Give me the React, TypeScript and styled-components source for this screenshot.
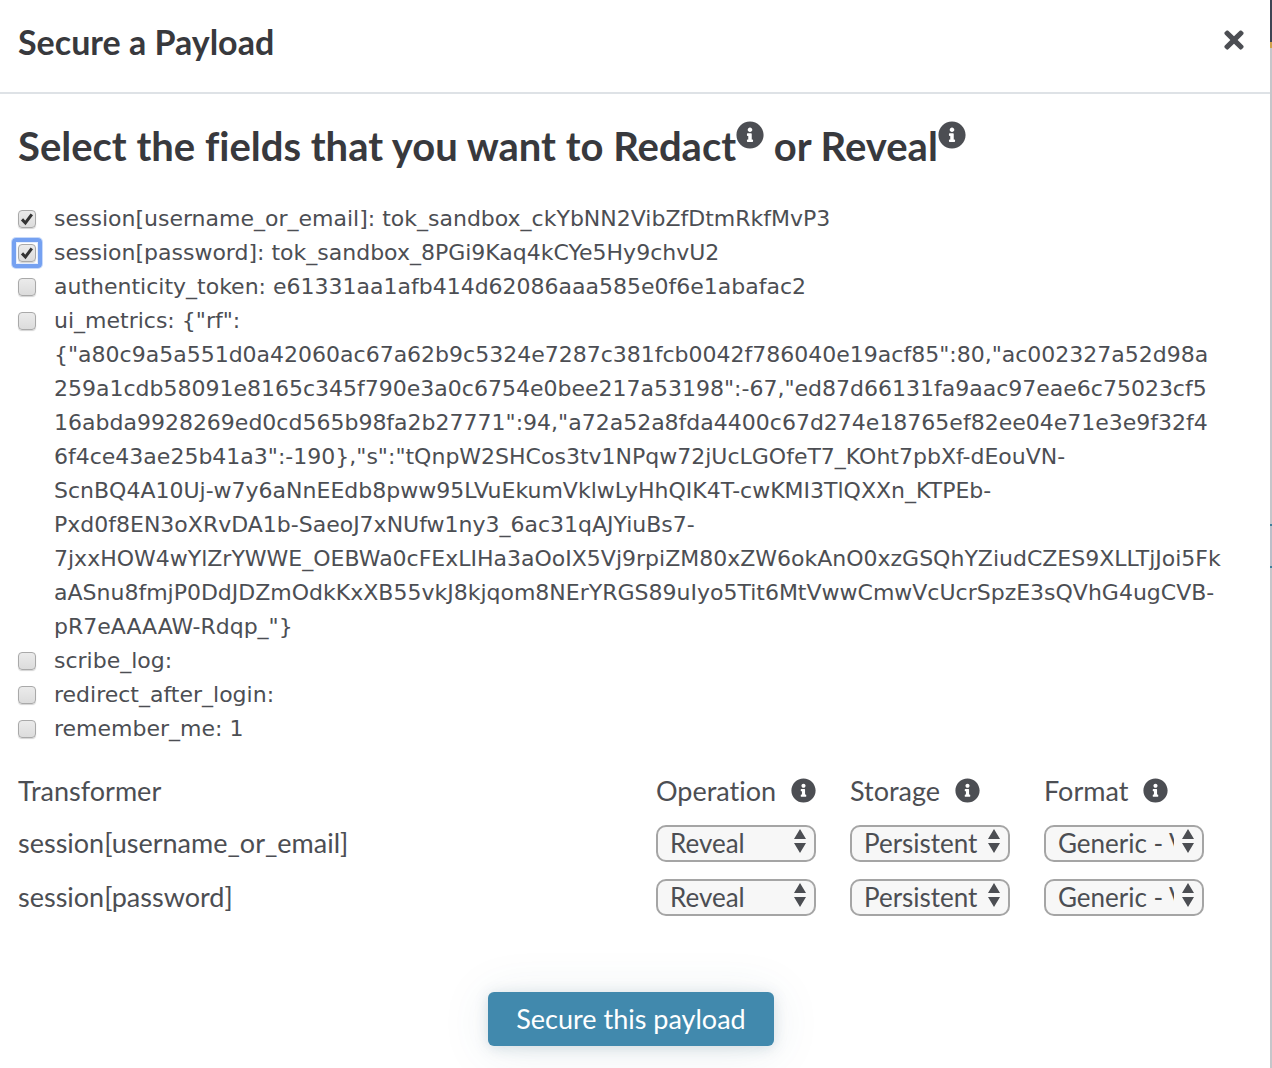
import React, { useState } from "react";
import styled, { createGlobalStyle } from "styled-components";
import { FaInfoCircle, FaTimes } from "react-icons/fa";

const ink = "#4c4e53";
const heading = "#38393d";

const GlobalStyle = createGlobalStyle`
  *, *::before, *::after { box-sizing: border-box; }
  body {
    margin: 0;
    color: ${ink};
    font-family: Lato, "Open Sans", sans-serif;
    font-variant-ligatures: none;
    background: #c5c6ca;
  }
`;

const Page = styled.div`
  min-height: 100vh;
  display: flex;
  padding-right: 2px;
  background: linear-gradient(
    #3d4554 0 42px,
    #cfa24c 42px 48px,
    #c5c6ca 48px 524px,
    #3f7f9b 524px 526px,
    #bcbfc9 526px 566px,
    #3f7f9b 566px 568px,
    #c5c6ca 568px
  );
`;

const Modal = styled.section`
  flex: 1;
  min-width: 0;
  background: #fff;
`;

const Header = styled.header`
  display: flex;
  align-items: center;
  justify-content: space-between;
  height: 94px;
  padding: 0 22px 8px 18px;
  border-bottom: 2px solid #dee2e6;
`;

const Title = styled.h1`
  margin: 0;
  color: ${heading};
  font-size: 34px;
  line-height: 40px;
`;

const CloseButton = styled.button`
  display: flex;
  padding: 0 0 4px;
  border: 0;
  background: none;
  color: ${ink};
  font-size: 28px;
  cursor: pointer;
`;

const Body = styled.div`
  padding: 27px 26px 22px 18px;
`;

const Question = styled.h2`
  margin: 0 0 31px;
  color: ${heading};
  font-size: 40px;
  line-height: 50px;
`;

const HeadingIcon = styled(FaInfoCircle)`
  width: 28px;
  height: 28px;
  color: ${ink};
  vertical-align: 12px;
`;

const FieldList = styled.ul`
  margin: 0 0 27px;
  padding: 0;
  list-style: none;
  font-family: "DejaVu Sans", "Open Sans", sans-serif;
  font-size: 22px;
  line-height: 34px;
`;

const FieldLabel = styled.label`
  display: flex;
  align-items: flex-start;
  gap: 18px;
`;

const FieldText = styled.span`
  min-width: 0;
  white-space: pre-line;
  overflow-wrap: anywhere;
`;

const CheckFrame = styled.span`
  position: relative;
  display: flex;
  flex: none;
  margin-top: 8px;

  &:focus-within::before {
    content: "";
    position: absolute;
    inset: -6px;
    border: 4px solid #75a1f1;
    border-radius: 4px;
    box-shadow: 0 0 0 1px #c8dafa, inset 0 0 0 1px #e4edfd;
    pointer-events: none;
  }
`;

const CheckMark = styled.svg`
  position: absolute;
  inset: 0;
  display: none;
  pointer-events: none;
`;

const CheckBox = styled.input`
  appearance: none;
  width: 18px;
  height: 18px;
  margin: 0;
  border: 1px solid #a9a9a9;
  border-radius: 4px;
  outline: none;
  background: linear-gradient(#ebebeb, #dcdcdc);
  box-shadow: 0 1px 1px #d4d4d4;

  &:checked + ${CheckMark} { display: block; }
`;

const TransformTable = styled.table`
  width: 100%;
  table-layout: fixed;
  border-collapse: collapse;
  font-size: 27px;
`;

const HeadCell = styled.th<{ $width?: number }>`
  width: ${(p) => (p.$width ? `${p.$width}px` : "auto")};
  height: 44px;
  padding: 0 0 10px;
  font-weight: 400;
  text-align: left;
`;

const HeadContent = styled.span`
  display: flex;
  align-items: center;
  gap: 15px;

  svg { width: 25px; height: 25px; }
`;

const NameCell = styled.th`
  height: 54px;
  padding: 0 0 4px;
  font-weight: 400;
  text-align: left;
`;

const ControlCell = styled.td`
  height: 54px;
  padding: 0 0 1px;
`;

const SelectFrame = styled.span`
  position: relative;
  display: flex;
  width: 160px;
`;

const Select = styled.select`
  appearance: none;
  width: 100%;
  height: 37px;
  padding: 0 28px 3px 12px;
  border: 2px solid #a5a5a5;
  border-radius: 10px;
  background: #f7f7f7;
  color: ${ink};
  font: 26px Lato, sans-serif;
`;

const Arrows = styled.svg`
  position: absolute;
  top: 4px;
  right: 10px;
  fill: ${ink};
  pointer-events: none;
`;

const Footer = styled.footer`
  display: flex;
  justify-content: center;
  padding-top: 67px;
`;

const SubmitButton = styled.button`
  height: 54px;
  padding: 0 28px 2px;
  border: 0;
  border-radius: 6px;
  background: #4189ad;
  box-shadow: 0 2px 14px rgba(50, 95, 120, 0.18), 0 4px 50px rgba(50, 95, 120, 0.1);
  color: #fff;
  font: 27px Lato, sans-serif;
  cursor: pointer;
`;

const metrics = `{"rf":
{"a80c9a5a551d0a42060ac67a62b9c5324e7287c381fcb0042f786040e19acf85":80,"ac002327a52d98a
259a1cdb58091e8165c345f790e3a0c6754e0bee217a53198":-67,"ed87d66131fa9aac97eae6c75023cf5
16abda9928269ed0cd565b98fa2b27771":94,"a72a52a8fda4400c67d274e18765ef82ee04e71e3e9f32f4
6f4ce43ae25b41a3":-190},"s":"tQnpW2SHCos3tv1NPqw72jUcLGOfeT7_KOht7pbXf-dEouVN-
ScnBQ4A10Uj-w7y6aNnEEdb8pww95LVuEkumVklwLyHhQIK4T-cwKMI3TlQXXn_KTPEb-
Pxd0f8EN3oXRvDA1b-SaeoJ7xNUfw1ny3_6ac31qAJYiuBs7-
7jxxHOW4wYlZrYWWE_OEBWa0cFExLIHa3aOoIX5Vj9rpiZM80xZW6okAnO0xzGSQhYZiudCZES9XLLTjJoi5Fk
aASnu8fmjP0DdJDZmOdkKxXB55vkJ8kjqom8NErYRGS89uIyo5Tit6MtVwwCmwVcUcrSpzE3sQVhG4ugCVB-
pR7eAAAAW-Rdqp_"}`;

const fields = [
  { name: "session[username_or_email]", value: "tok_sandbox_ckYbNN2VibZfDtmRkfMvP3" },
  { name: "session[password]", value: "tok_sandbox_8PGi9Kaq4kCYe5Hy9chvU2" },
  { name: "authenticity_token", value: "e61331aa1afb414d62086aaa585e0f6e1abafac2" },
  { name: "ui_metrics", value: metrics },
  { name: "scribe_log", value: "" },
  { name: "redirect_after_login", value: "" },
  { name: "remember_me", value: "1" },
];

const controls = [
  { title: "Operation", width: 194, options: ["Reveal", "Redact"] },
  { title: "Storage", width: 194, options: ["Persistent", "Volatile"] },
  { title: "Format", width: 200, options: ["Generic - VGS Alias", "UUID"] },
];

export default function App() {
  const [selected, setSelected] = useState<string[]>([fields[0].name, fields[1].name]);

  const toggle = (name: string) =>
    setSelected((now) => (now.includes(name) ? now.filter((n) => n !== name) : [...now, name]));

  return (
    <Page>
      <GlobalStyle />
      <Modal role="dialog" aria-labelledby="modal-title">
        <Header>
          <Title id="modal-title">Secure a Payload</Title>
          <CloseButton type="button" aria-label="Close">
            <FaTimes />
          </CloseButton>
        </Header>
        <Body>
          <Question>
            Select the fields that you want to Redact
            <HeadingIcon /> or Reveal
            <HeadingIcon />
          </Question>
          <FieldList>
            {fields.map((f) => (
              <li key={f.name}>
                <FieldLabel>
                  <CheckFrame>
                    <CheckBox
                      type="checkbox"
                      checked={selected.includes(f.name)}
                      onChange={() => toggle(f.name)}
                      autoFocus={f.name === "session[password]"}
                    />
                    <CheckMark width="18" height="18" viewBox="0 0 18 18" aria-hidden="true">
                      <path d="M4 9.4 7.4 13 13.8 4.4" fill="none" stroke="#333" strokeWidth="3" />
                    </CheckMark>
                  </CheckFrame>
                  <FieldText>{`${f.name}: ${f.value}`}</FieldText>
                </FieldLabel>
              </li>
            ))}
          </FieldList>
          <TransformTable>
            <thead>
              <tr>
                <HeadCell scope="col">Transformer</HeadCell>
                {controls.map((c) => (
                  <HeadCell key={c.title} scope="col" $width={c.width}>
                    <HeadContent>
                      {c.title}
                      <FaInfoCircle />
                    </HeadContent>
                  </HeadCell>
                ))}
              </tr>
            </thead>
            <tbody>
              {fields
                .filter((f) => selected.includes(f.name))
                .map((f) => (
                  <tr key={f.name}>
                    <NameCell scope="row">{f.name}</NameCell>
                    {controls.map((c) => (
                      <ControlCell key={c.title}>
                        <SelectFrame>
                          <Select aria-label={`${c.title} for ${f.name}`}>
                            {c.options.map((o) => (
                              <option key={o}>{o}</option>
                            ))}
                          </Select>
                          <Arrows width="12" height="24" viewBox="0 0 12 24" aria-hidden="true">
                            <path d="M6 0 12 10H0ZM0 14H12L6 24Z" />
                          </Arrows>
                        </SelectFrame>
                      </ControlCell>
                    ))}
                  </tr>
                ))}
            </tbody>
          </TransformTable>
          <Footer>
            <SubmitButton type="button">Secure this payload</SubmitButton>
          </Footer>
        </Body>
      </Modal>
    </Page>
  );
}
